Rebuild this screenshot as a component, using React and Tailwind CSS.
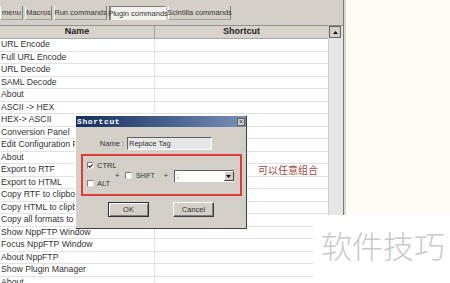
import React from "react";

const rows = [
  "URL Encode",
  "Full URL Encode",
  "URL Decode",
  "SAML Decode",
  "About",
  "ASCII -> HEX",
  "HEX-> ASCII",
  "Conversion Panel",
  "Edit Configuration File",
  "About",
  "Export to RTF",
  "Export to HTML",
  "Copy RTF to clipboard",
  "Copy HTML to clipboard",
  "Copy all formats to clipboard",
  "Show NppFTP Window",
  "Focus NppFTP Window",
  "About NppFTP",
  "Show Plugin Manager",
  "About",
];

const tabs = [
  { label: "menu", w: "w-[23px]", active: false },
  { label: "Macros", w: "w-[27px]", active: false },
  { label: "Run commands", w: "w-[53px]", active: false },
  { label: "Plugin commands", w: "w-[57px]", active: true },
  { label: "Scintilla commands", w: "w-[63px]", active: false },
];

function Checkbox({ checked }) {
  return (
    <div className="w-[7px] h-[7px] bg-white border-t border-l border-t-[#808080] border-l-[#808080] border-b border-r border-b-[#e0e0e0] border-r-[#e0e0e0] flex items-center justify-center">
      {checked && (
        <svg width="6" height="6" viewBox="0 0 6 6">
          <path d="M0.5 2.8 L2.2 4.5 L5.5 1" stroke="#111" strokeWidth="1.3" fill="none" />
        </svg>
      )}
    </div>
  );
}

export default function App() {
  return (
    <div
      className="relative w-[450px] h-[283px] overflow-hidden flex bg-[#fdfaf3] text-[#333]"
      style={{ fontFamily: '"Liberation Sans", Arial, sans-serif' }}
    >
      {/* left panel */}
      <div className="w-[343px] h-full flex flex-col bg-[#d4d0c8]">
        {/* tab bar */}
        <div className="h-[25px] flex items-start pt-[6px] gap-[2px]">
          {tabs.map((t) => (
            <div
              key={t.label}
              className={
                "h-[14px] flex items-center justify-center text-[7.5px] whitespace-nowrap " +
                t.w +
                (t.active
                  ? " bg-[#f4f2ee] border-l-2 border-t border-l-[#808080] border-t-[#808080] border-r border-r-white"
                  : " border-l border-l-white border-r border-r-[#808080] border-b border-b-[#a0a0a0]")
              }
            >
              {t.label}
            </div>
          ))}
        </div>
        {/* list + scrollbar */}
        <div className="flex-1 flex min-h-0">
          <div className="w-[328px] flex flex-col bg-white">
            <div className="h-[14px] flex bg-[#d8d4cc] border-t border-t-[#909090] border-b border-b-[#a8a8a8] text-[9px] font-bold text-[#222]">
              <div className="w-[155px] flex items-center justify-center border-r border-r-[#a0a0a0]">Name</div>
              <div className="flex-1 flex items-center justify-center">Shortcut</div>
            </div>
            {rows.map((r, i) => (
              <div key={i} className="h-[12.5px] shrink-0 flex border-b border-b-[#e2e2e2] text-[8.7px] leading-none">
                <div className="w-[155px] pl-[1px] flex items-center whitespace-nowrap overflow-hidden border-r border-r-[#e2e2e2]">
                  {r}
                </div>
                <div className="flex-1" />
              </div>
            ))}
          </div>
          <div className="w-[15px] flex flex-col bg-[#e6e6e6] border-l border-l-[#d0d0d0] border-t border-t-[#909090]">
            <div className="h-[12px] w-[12px] ml-[0px] bg-[#d4d0c8] border border-[#606060] flex items-center justify-center">
              <svg width="5" height="3" viewBox="0 0 5 3">
                <path d="M0 3 L2.5 0 L5 3 Z" fill="#111" />
              </svg>
            </div>
          </div>
        </div>
      </div>
      <div className="w-[1px] h-full bg-[#7a7a7a]" />
      <div className="w-[2px] h-full bg-[#dcd8d0]" />
      <div className="flex-1 h-full bg-[#fffbf5]" />

      {/* Shortcut dialog */}
      <div className="absolute left-[75px] top-[115px] w-[172px] h-[114px] bg-[#d4d0c8] border border-t-white border-l-white border-r-[#404040] border-b-[#404040] flex flex-col">
        <div className="h-[11px] flex items-center justify-between px-[1px] bg-gradient-to-r from-[#142f5e] to-[#7890b8]">
          <span
            className="text-[8px] font-bold text-white tracking-[0.6px]"
            style={{ fontFamily: '"Liberation Mono", "DejaVu Sans Mono", monospace' }}
          >
            Shortcut
          </span>
          <div className="w-[8px] h-[8px] bg-[#d4d0c8] border border-[#606060] flex items-center justify-center text-[7px] leading-none text-[#333]">
            ×
          </div>
        </div>
        {/* name row */}
        <div className="mt-[10px] flex items-center pl-[22px] h-[13px]">
          <span className="w-[29px] text-[7.5px] text-right pr-[3px]">Name :</span>
          <div className="w-[85px] h-[13px] bg-[#e6e6e6] border-t border-l border-t-[#606060] border-l-[#606060] border-b border-r border-b-white border-r-white text-[7.5px] flex items-center pl-[1px]">
            Replace Tag
          </div>
        </div>
        {/* red frame */}
        <div className="mt-[4px] ml-[5px] w-[161px] h-[42px] border-2 border-[#e03a3a] flex text-[7.5px]">
          <div className="flex flex-col justify-between pl-[4px] pt-[4px] pb-[5px] w-[32px]">
            <div className="flex items-center gap-[3px]">
              <Checkbox checked />
              <span>CTRL</span>
            </div>
            <div className="flex items-center gap-[3px]">
              <Checkbox />
              <span>ALT</span>
            </div>
          </div>
          <div className="flex items-center pt-[1px]">
            <span className="w-[10px]">+</span>
            <Checkbox />
            <span className="ml-[4px] text-[6.5px]">SHIFT</span>
            <span className="ml-[9px] w-[10px]">+</span>
            <div className="w-[60px] h-[12px] bg-white border-t border-l border-t-[#606060] border-l-[#606060] flex items-center justify-between">
              <span className="pl-[2px]">;</span>
              <div className="w-[10px] h-[10px] bg-[#d4d0c8] border border-t-white border-l-white border-r-[#404040] border-b-[#404040] flex items-center justify-center">
                <svg width="5" height="3" viewBox="0 0 5 3">
                  <path d="M0 0 L5 0 L2.5 3 Z" fill="#111" />
                </svg>
              </div>
            </div>
          </div>
        </div>
        {/* buttons */}
        <div className="mt-[6px] flex pl-[32px] gap-[24px]">
          <div className="w-[41px] h-[15px] border border-[#303030] flex items-center justify-center text-[7.5px] shadow-[inset_1px_1px_0_#fff,inset_-1px_-1px_0_#808080]">
            OK
          </div>
          <div className="w-[41px] h-[15px] border border-t-white border-l-white border-r-[#404040] border-b-[#404040] flex items-center justify-center text-[7.5px] shadow-[inset_-1px_-1px_0_#808080]">
            Cancel
          </div>
        </div>
      </div>

      {/* annotation */}
      <div
        className="absolute left-[258px] top-[162px] text-[10px] text-[#a24a40] whitespace-nowrap"
        style={{ fontFamily: '"Noto Sans CJK SC", sans-serif' }}
      >
        可以任意组合
      </div>

      {/* watermark overlay */}
      <div className="absolute left-[313px] top-[215px] right-0 bottom-0 bg-white">
        <div
          className="ml-[8px] mt-[14px] text-[31px] leading-none text-[#cacaca] whitespace-nowrap"
          style={{ fontFamily: '"Noto Sans CJK SC", sans-serif', fontWeight: 300 }}
        >
          软件技巧
        </div>
      </div>
    </div>
  );
}
